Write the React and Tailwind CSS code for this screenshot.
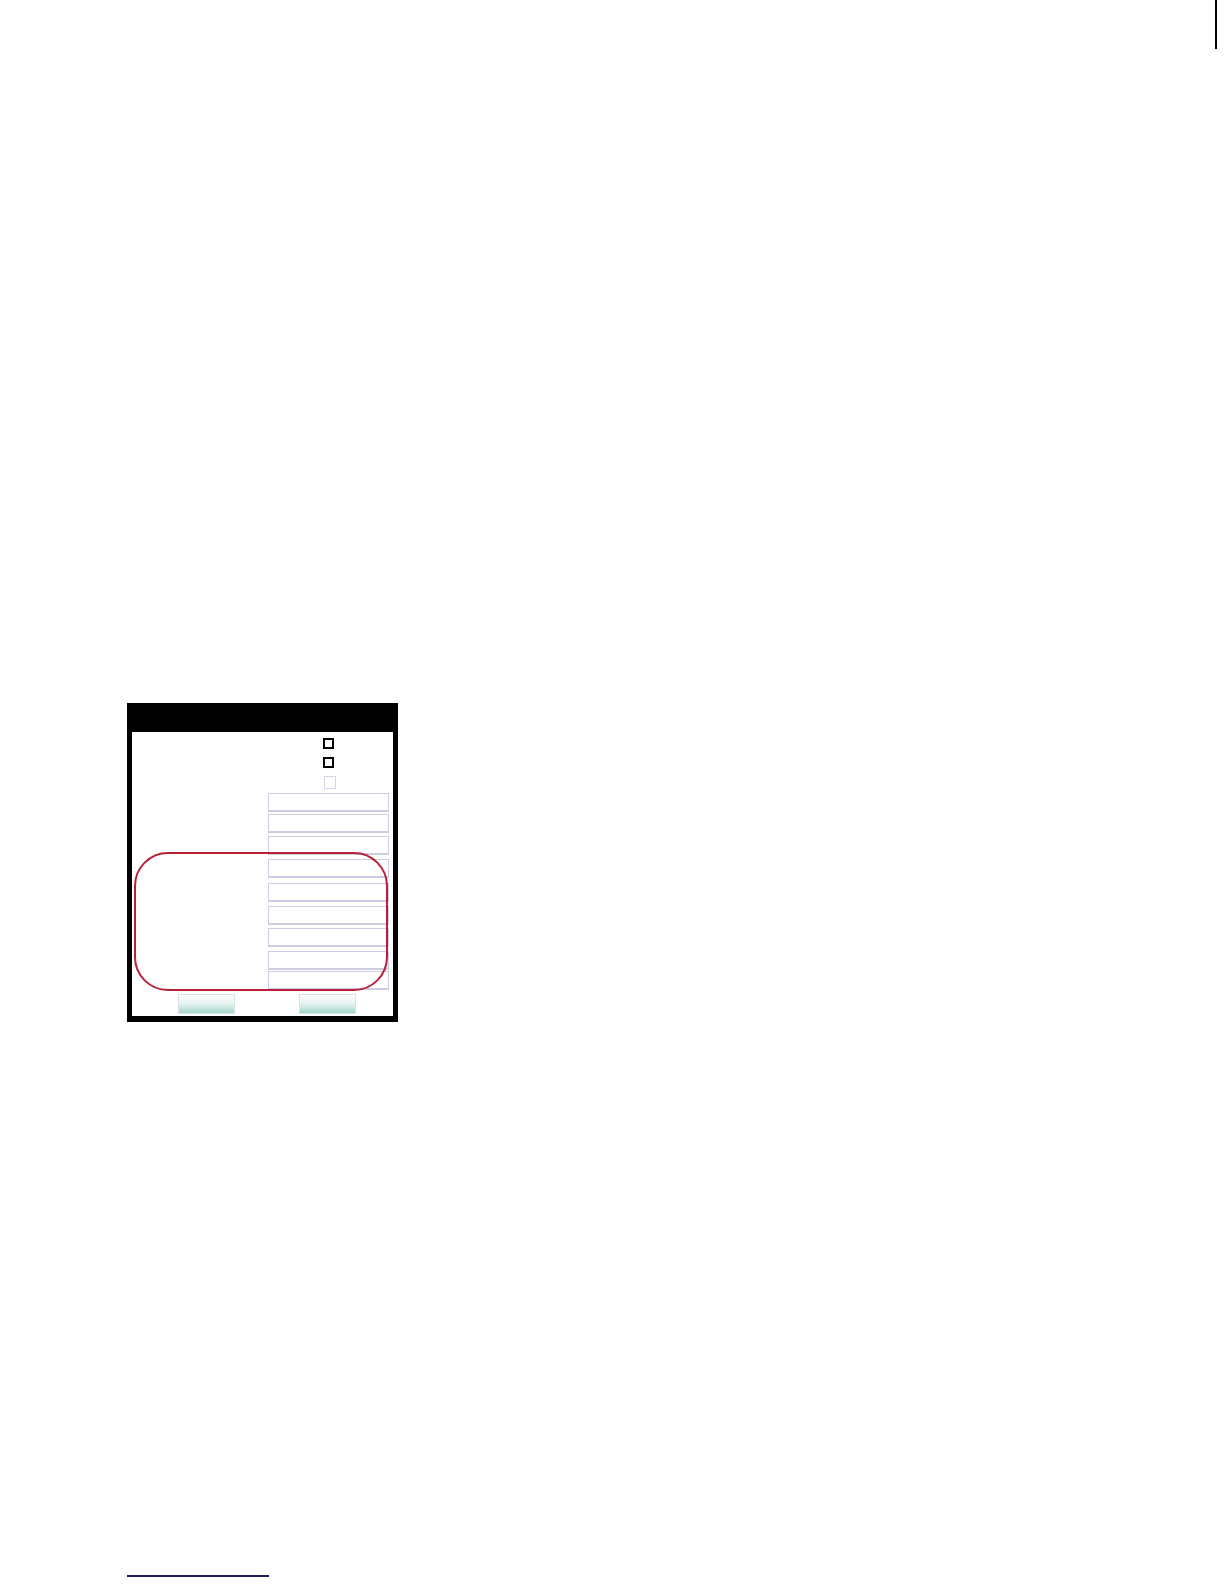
import React from 'react';

const inputTops = ['mt-[4px]', 'mt-[2px]', 'mt-[3px]', 'mt-[4px]', 'mt-[5px]', 'mt-[4px]', 'mt-[3px]', 'mt-[4px]', 'mt-[1px]'];

const Casilla = ({ clase }) => <div className={clase} />;

const App = () => {
    return (
        <div className="min-h-[1584px] w-[1224px] bg-white flex flex-col">
            <div className="flex justify-end">
                <div className="h-[49px] w-[2px] bg-black mr-[7px]" />
            </div>

            <div className="mt-[654px] ml-[127px] w-[271px] bg-black px-[5px] pb-[6px]">
                <div className="h-[29px]" />
                <div className="relative bg-white h-[284px] pt-[6px] flex flex-col">
                    <div className="pl-[191px]">
                        <Casilla clase="w-[11px] h-[11px] border-2 border-black" />
                    </div>
                    <div className="pl-[191px] mt-[8px]">
                        <Casilla clase="w-[11px] h-[11px] border-2 border-black" />
                    </div>
                    <div className="pl-[192px] mt-[8px]">
                        <Casilla clase="w-[12px] h-[13px] border border-[#d4d4ee]" />
                    </div>

                    {inputTops.map((mt, i) => (
                        <div key={i} className={`pl-[136px] ${mt}`}>
                            <div className="w-[121px] h-[19px] border border-[#cdcde4] border-b-2 bg-white" />
                        </div>
                    ))}

                    <div className="flex pl-[46px] gap-[64px] mt-[4px]">
                        <div className="w-[57px] h-[20px] border border-[#d8e4e2] bg-gradient-to-b from-white via-[#e4f3f0] to-[#a3d6cc]" />
                        <div className="w-[57px] h-[20px] border border-[#d8e4e2] bg-gradient-to-b from-white via-[#e4f3f0] to-[#a3d6cc]" />
                    </div>

                    {/* marco rojo encima de los campos */}
                    <div className="absolute left-[2px] top-[120px] w-[254px] h-[139px] rounded-[34px] border-2 border-[#b8203a] pointer-events-none" />
                </div>
            </div>

            <div className="mt-[553px] ml-[127px] w-[142px] h-[2px] bg-[#1c1c6c]" />
        </div>
    );
};

export default App;
